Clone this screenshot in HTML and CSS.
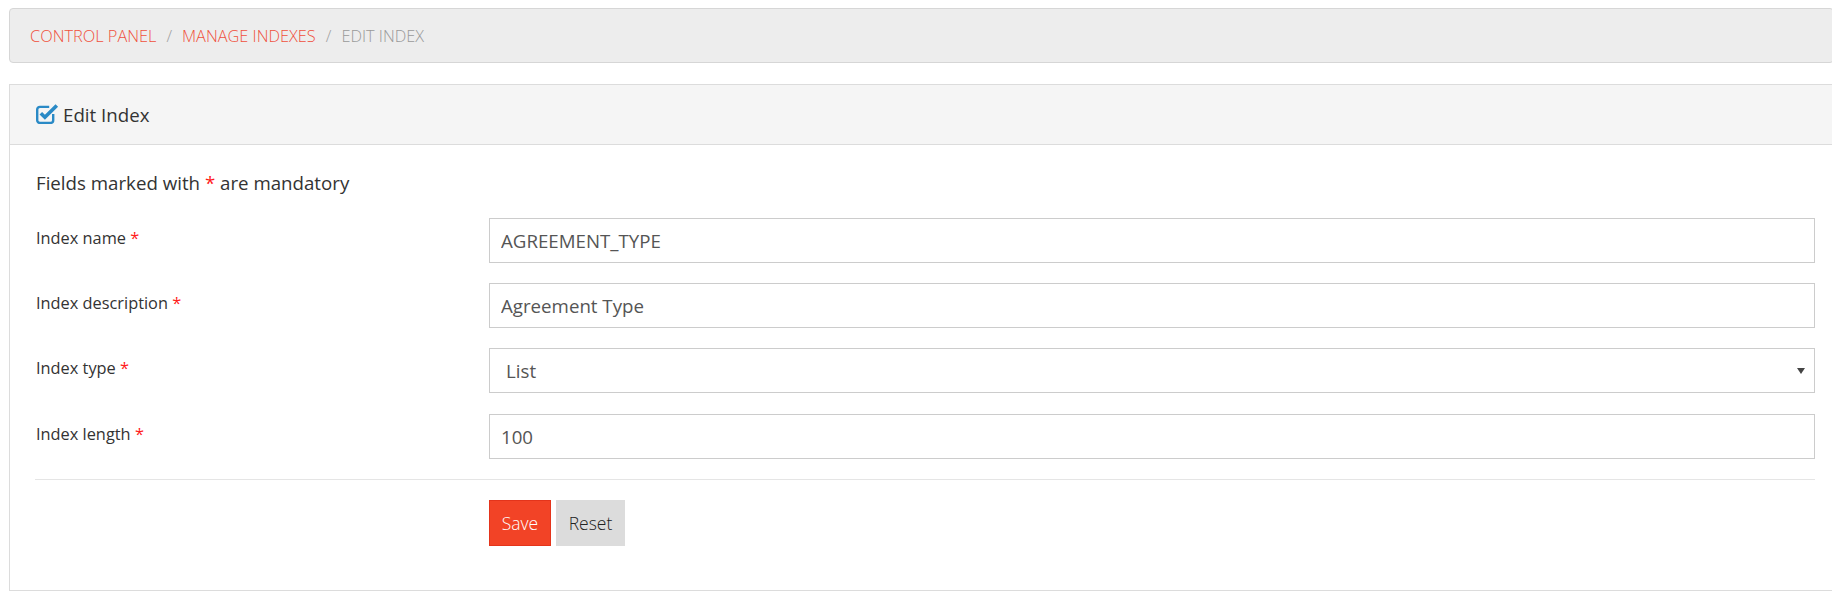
FILE: index.html
```html
<!DOCTYPE html>
<html lang="en">
<head>
<meta charset="utf-8">
<title>Edit Index</title>
<link rel="stylesheet" href="styles.css">
</head>
<body>
<div class="page">
  <nav class="breadcrumb">
    <a class="crumb-link" href="#">CONTROL PANEL</a>
    <span class="sep">/</span>
    <a class="crumb-link" href="#">MANAGE INDEXES</a>
    <span class="sep">/</span>
    <span class="crumb-active">EDIT INDEX</span>
  </nav>

  <section class="panel">
    <header class="panel-heading">
      <svg class="heading-icon" width="23" height="20" viewBox="0 0 23 20" aria-hidden="true">
        <path d="M17.2 10 V16.2 A2.7 2.7 0 0 1 14.5 18.9 H3.9 A2.7 2.7 0 0 1 1.2 16.2 V5.6 A2.7 2.7 0 0 1 3.9 2.9 H13.2" fill="none" stroke="#2a8ac6" stroke-width="2.4"/>
        <path d="M4.8 9.2 L8.9 13.3 L20.8 1.4" fill="none" stroke="#2a8ac6" stroke-width="3.6" stroke-linecap="butt" stroke-linejoin="miter"/>
      </svg>
      <span class="heading-text">Edit Index</span>
    </header>

    <div class="panel-body">
      <p class="note">Fields marked with <span class="req">*</span> are mandatory</p>

      <form class="form">
        <div class="row">
          <label class="label">Index name <span class="req">*</span></label>
          <div class="control"><input class="input" type="text" value="AGREEMENT_TYPE"></div>
        </div>
        <div class="row">
          <label class="label">Index description <span class="req">*</span></label>
          <div class="control"><input class="input" type="text" value="Agreement Type"></div>
        </div>
        <div class="row">
          <label class="label">Index type <span class="req">*</span></label>
          <div class="control select-wrap">
            <select class="input select">
              <option>List</option>
            </select>
          </div>
        </div>
        <div class="row">
          <label class="label">Index length <span class="req">*</span></label>
          <div class="control"><input class="input" type="text" value="100"></div>
        </div>

        <hr class="divider">

        <div class="row actions">
          <div class="label"></div>
          <div class="control buttons">
            <button class="btn btn-save" type="button">Save</button>
            <button class="btn btn-reset" type="button">Reset</button>
          </div>
        </div>
      </form>
    </div>
  </section>
</div>
</body>
</html>
```

FILE: styles.css
```css
html, body {
  margin: 0;
  padding: 0;
  overflow: hidden;
  background: #ffffff;
}

body {
  font-family: "Open Sans", "Liberation Sans", sans-serif;
  color: #333333;
}

.page {
  width: 1825px;
  padding: 8px 0 0 9px;
}

/* Breadcrumb */
.breadcrumb {
  display: flex;
  align-items: center;
  height: 53px;
  padding: 0 0 0 20px;
  background: #ededed;
  border: 1px solid #d6d6d6;
  border-radius: 4px;
  font-size: 16.35px;
  font-weight: 300;
}

.crumb-link {
  color: #f0503c;
  text-decoration: none;
}

.sep {
  color: #a0a0a0;
  padding: 0 10px;
}

.crumb-active {
  color: #999999;
}

/* Panel */
.panel {
  margin-top: 21px;
  border: 1px solid #dcdcdc;
  background: #ffffff;
}

.panel-heading {
  display: flex;
  align-items: center;
  height: 59px;
  padding-left: 26px;
  background: #f5f5f5;
  border-bottom: 1px solid #dcdcdc;
}

.heading-icon {
  display: block;
  margin-right: 4px;
  margin-top: -1px;
}

.heading-text {
  font-size: 18.7px;
  color: #333333;
}

.panel-body {
  padding: 25px 18px 44px 25px;
}

.note {
  margin: 0 0 21px 1px;
  font-size: 18.7px;
  line-height: 26.5px;
  color: #333333;
}

.req {
  color: #ff1a1a;
}

.form {
  margin: 0;
}

.row {
  display: flex;
  margin-bottom: 20.4px;
}

.label {
  flex: 0 0 453px;
  padding: 9px 0 0 1px;
  font-size: 16.35px;
  line-height: 23px;
  color: #333333;
}

.control {
  flex: 1 1 auto;
  position: relative;
}

.input {
  display: block;
  box-sizing: border-box;
  width: 100%;
  height: 45px;
  margin: 0;
  padding: 0 11px;
  border: 1px solid #cccccc;
  border-radius: 0;
  background: #ffffff;
  font-family: "Open Sans", "Liberation Sans", sans-serif;
  font-size: 18.7px;
  color: #555555;
  outline: none;
}

.select {
  -webkit-appearance: none;
  appearance: none;
  padding-left: 16px;
}

.select-wrap::after {
  content: "";
  position: absolute;
  right: 10px;
  top: 20px;
  width: 0;
  height: 0;
  border-left: 4px solid transparent;
  border-right: 4px solid transparent;
  border-top: 6px solid #444444;
  pointer-events: none;
}

.divider {
  margin: 0 0 20px 0;
  border: 0;
  border-top: 1px solid #e5e5e5;
  height: 0;
}

.row + .divider {
  margin-top: 2px;
}

.actions {
  margin-bottom: 0;
}

.buttons {
  display: flex;
  gap: 5px;
}

.btn {
  box-sizing: border-box;
  height: 46px;
  margin: 0;
  padding: 0 11px;
  border: 1px solid transparent;
  border-radius: 0;
  font-family: "Open Sans", "Liberation Sans", sans-serif;
  font-size: 17.5px;
  font-weight: 300;
  cursor: pointer;
}

.btn-save {
  width: 62px;
  background: #f24326;
  border-color: #e4341b;
  color: #ffffff;
}

.btn-reset {
  width: 69px;
  background: #dcdcdc;
  border-color: #dcdcdc;
  color: #222222;
}
```
